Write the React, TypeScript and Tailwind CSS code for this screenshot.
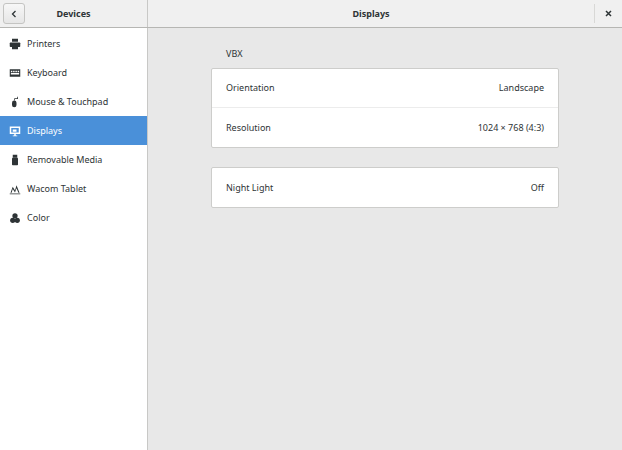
import React from "react";

const Icon = ({ children, white }: { children: React.ReactNode; white?: boolean }) => (
  <svg width="12" height="12" viewBox="0 0 16 16" fill={white ? "#fff" : "#2e3436"} className="shrink-0">{children}</svg>
);

const items: { label: string; icon: React.ReactNode }[] = [
  { label: "Printers", icon: <><rect x="4" y="1" width="8" height="4" /><rect x="1" y="6" width="14" height="6" rx="1" /><rect x="4" y="11" width="8" height="4" /></> },
  { label: "Keyboard", icon: <path fillRule="evenodd" d="M1 3h14v10H1zM2.5 5v2h2V5zm3 0v2h2V5zm3 0v2h2V5zm3 0v2h2V5zM2.5 8v2h11V8z" /> },
  { label: "Mouse & Touchpad", icon: <><rect x="4" y="6" width="6" height="9" rx="3" /><path d="M7 6V3h4V1h1v3H8v2z" /></> },
  { label: "Displays", icon: <path fillRule="evenodd" d="M1 2h14v10H9v2h2v1H5v-1h2v-2H1zm2 2v6h10V4z M5 6h5v3H5z" /> },
  { label: "Removable Media", icon: <><rect x="4" y="5" width="8" height="10" rx="1" /><rect x="5" y="1" width="6" height="4" /></> },
  { label: "Wacom Tablet", icon: <path d="M1 14h14v1H1zM2 13l3-8 3 5 2-7 4 10h-1.5L10 7 8 12.5 5 8 3.5 13z" /> },
  { label: "Color", icon: <><circle cx="8" cy="5" r="3.5" /><circle cx="5" cy="11" r="3.5" /><circle cx="11" cy="11" r="3.5" /></> },
];

export default function App() {
  return (
    <div className="w-[622px] h-[450px] flex flex-col bg-[#e8e8e8] text-[#2e3436] text-[9px] overflow-hidden" style={{ fontFamily: '"Noto Sans", "Open Sans", sans-serif' }}>
      <div className="h-[28px] flex shrink-0 bg-[#f0f0f0] border-b border-[#b6b6b3]">
        <div className="w-[148px] flex items-center border-r border-[#c8c8c6] relative">
          <div className="absolute left-[3px] top-[3px] w-[22px] h-[21px] border border-[#c4c4c2] rounded-[3px] bg-gradient-to-b from-[#f7f7f7] to-[#e6e6e6] flex items-center justify-center">
            <svg width="8" height="8" viewBox="0 0 8 8"><path d="M5.5 1L2.5 4l3 3" stroke="#2e3436" strokeWidth="1.3" fill="none" /></svg>
          </div>
          <div className="flex-1 text-center font-bold">Devices</div>
        </div>
        <div className="flex-1 flex items-center justify-center font-bold">Displays</div>
        <div className="w-[28px] flex items-center justify-center border-l border-[#d8d8d6] my-[4px]">
          <svg width="7" height="7" viewBox="0 0 7 7"><path d="M1 1l5 5M6 1L1 6" stroke="#2e3436" strokeWidth="1.5" /></svg>
        </div>
      </div>
      <div className="flex flex-1">
        <div className="w-[148px] bg-white border-r border-[#c8c8c6] pt-px">
          {items.map((it) => {
            const sel = it.label === "Displays";
            return (
              <div key={it.label} className={`h-[29px] flex items-center gap-[6px] pl-[9px] ${sel ? "bg-[#4a90d9] text-white" : ""}`}>
                <Icon white={sel}>{it.icon}</Icon>
                <span>{it.label}</span>
              </div>
            );
          })}
        </div>
        <div className="flex-1 pl-[63px] pt-[19px]">
          <div className="w-[348px]">
            <div className="pl-[15px] h-[14px] mb-[7px] flex items-center">VBX</div>
            <div className="bg-white border border-[#cdcdcb] rounded-[2px]">
              <div className="h-[39px] flex items-center justify-between px-[14px] border-b border-[#ececec]"><span>Orientation</span><span>Landscape</span></div>
              <div className="h-[39px] flex items-center justify-between px-[14px]"><span>Resolution</span><span>1024 × 768 (4:3)</span></div>
            </div>
            <div className="mt-[19px] bg-white border border-[#cdcdcb] rounded-[2px]">
              <div className="h-[39px] flex items-center justify-between px-[14px]"><span>Night Light</span><span>Off</span></div>
            </div>
          </div>
        </div>
      </div>
    </div>
  );
}
